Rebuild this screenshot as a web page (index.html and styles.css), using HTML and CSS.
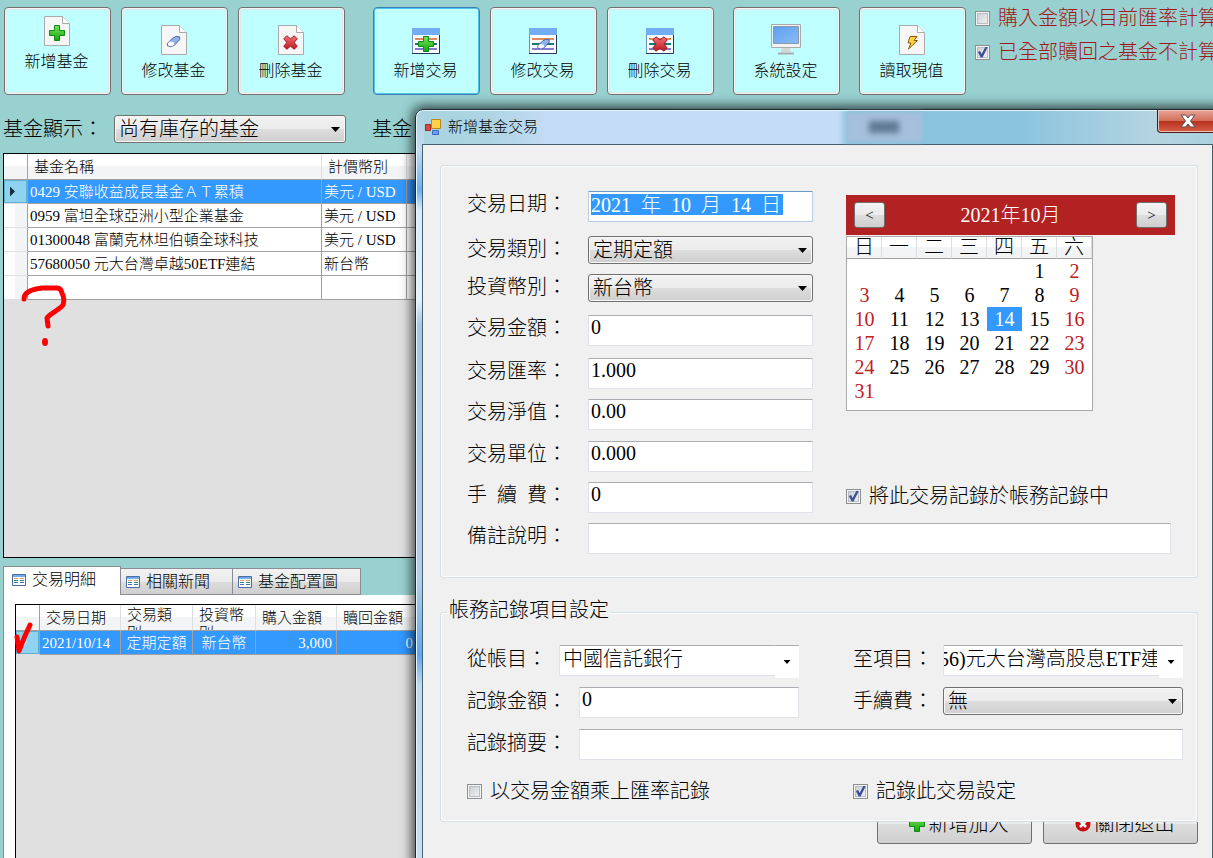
FILE: index.html
```html
<!DOCTYPE html>
<html lang="zh-Hant">
<head>
<meta charset="utf-8">
<title>新增基金交易</title>
<link rel="stylesheet" href="styles.css">
</head>
<body>
<svg class="defs" aria-hidden="true">
  <defs>
    <linearGradient id="green" x1="0" y1="0" x2="0" y2="1"><stop offset="0" stop-color="#7be05a"/><stop offset="1" stop-color="#14a80c"/></linearGradient>
    <linearGradient id="red" x1="0" y1="0" x2="0" y2="1"><stop offset="0" stop-color="#ee7376"/><stop offset="1" stop-color="#bd1a20"/></linearGradient>
    <linearGradient id="blue" x1="0" y1="0" x2="1" y2="1"><stop offset="0" stop-color="#5c9fee"/><stop offset="1" stop-color="#8abcf7"/></linearGradient>
    <symbol id="plus" viewBox="0 0 16 16"><path d="M5.500.5h5v5h5v5h-5v5h-5v-5h-5v-5h5z" fill="url(#green)" stroke="#0c8a12"/></symbol>
    <symbol id="cross" viewBox="0 0 16 16"><path d="M4 .8 8 4l4-3.200L15.200 4 12 8l3.200 4-3.200 3.200L8 12l-4 3.200L.8 12 4 8 .8 4z" fill="url(#red)" stroke="#a3161c" stroke-linejoin="round"/></symbol>
    <symbol id="eraser" viewBox="0 0 16 16"><path d="M1.500 10 7 4.500 11 2.500l3.500.5v3L9 12l-4 1.500-3.500-1z" fill="#8fb2ec" stroke="#48609f"/><path d="m2 10 2-2 4 .5 1 3-3.500 1.500-3.300-.8z" fill="#fff"/></symbol>
    <symbol id="page" viewBox="0 0 26 30"><path d="M.5.5h18l7 7v22H.5z" fill="#f6f6f6" stroke="#aaa"/><path d="M18.500.5v7h7" fill="#fff" stroke="#aaa"/></symbol>
    <symbol id="sheet" viewBox="0 0 28 26"><path d="M.5.5h27v25H.5z" fill="#fafcff" stroke="#7090b8"/><path d="M0 0h28v7H0z" fill="#72acf2"/><path d="M27.500 7v18.500H0" fill="none" stroke="#26385c"/><path d="M3 11h22" stroke="#e08a5c" stroke-width="2"/><path d="M3 16h22" stroke="#187878" stroke-width="2"/><path d="M3 21h22" stroke="#867ad0" stroke-width="2"/></symbol>
    <symbol id="list" viewBox="0 0 14 12"><path d="M.5.5h13v11H.5z" fill="#fff" stroke="#4c6c9c"/><path d="M1 1h12v2H1z" fill="#72acf2"/><path d="M2 4.500h4m2 0h4" stroke="#e0a052"/><path d="M2 6.500h4m2 0h4" stroke="#2b8a8a"/><path d="M2 8.500h4m2 0h4" stroke="#3d72c0"/></symbol>
  </defs>
</svg>

<main class="app">
  <header class="toolbar">
    <div class="group">
      <button class="tool tool-raised"><svg width="26" height="30"><use href="#page"/><use href="#plus" x="5" y="9" width="16" height="16"/></svg>新增基金</button>
      <button class="tool"><svg width="26" height="30"><use href="#page"/><use href="#eraser" x="5" y="9" width="15" height="15"/></svg>修改基金</button>
      <button class="tool"><svg width="26" height="30"><use href="#page"/><use href="#cross" x="5" y="10" width="15" height="15"/></svg>刪除基金</button>
    </div>
    <div class="group group-wide">
      <button class="tool tool-active"><svg width="28" height="30"><use href="#sheet" y="3" width="28" height="26"/><use href="#plus" x="6" y="11" width="16" height="16"/></svg>新增交易</button>
      <button class="tool"><svg width="28" height="30"><use href="#sheet" y="3" width="28" height="26"/><use href="#eraser" x="7" y="12" width="15" height="14"/></svg>修改交易</button>
      <button class="tool"><svg width="28" height="30"><use href="#sheet" y="3" width="28" height="26"/><use href="#cross" x="6" y="11" width="16" height="16"/></svg>刪除交易</button>
    </div>
    <button class="tool"><svg width="32" height="32" viewBox="0 0 32 32"><path d="M1.500 1.500h29v23h-29z" fill="#f2f2f2" stroke="#aaa"/><path d="M3.500 3.500h25v17h-25z" fill="url(#blue)" stroke="#8c99aa"/><path d="M12 25h8l1 4H11z" fill="#d5d5d5"/><path d="M8 30.500h16" stroke="#aaa" stroke-width="2"/></svg>系統設定</button>
    <button class="tool"><svg width="26" height="30"><use href="#page"/><path d="M11 11.500h7l-3 4h3.500L9.500 24l2.500-6H9z" fill="#ffd23e" stroke="#8a5a0a"/></svg>讀取現值</button>
    <div class="options">
      <label class="check"><input type="checkbox">購入金額以目前匯率計算</label>
      <label class="check"><input type="checkbox" checked>已全部贖回之基金不計算</label>
    </div>
  </header>

  <div class="filter">
    <label for="show">基金顯示：</label>
    <span class="select select-show"><select id="show"><option>尚有庫存的基金</option></select></span>
    <span class="filter-next">基金</span>
  </div>

  <section class="grid funds">
    <table>
      <colgroup><col class="c-head"><col class="c-name"><col class="c-cur"><col></colgroup>
      <thead><tr><th></th><th>基金名稱</th><th>計價幣別</th><th></th></tr></thead>
      <tbody>
        <tr class="selected"><th><i class="arrow"></i></th><td>0429 安聯收益成長基金ＡＴ累積</td><td>美元 / USD</td><td></td></tr>
        <tr><th></th><td>0959 富坦全球亞洲小型企業基金</td><td>美元 / USD</td><td></td></tr>
        <tr><th></th><td>01300048 富蘭克林坦伯頓全球科技</td><td>美元 / USD</td><td></td></tr>
        <tr><th></th><td>57680050 元大台灣卓越50ETF連結</td><td>新台幣</td><td></td></tr>
        <tr><th></th><td></td><td></td><td></td></tr>
      </tbody>
    </table>
  </section>

  <nav class="tabs">
    <button class="tab tab-on"><svg width="14" height="12"><use href="#list"/></svg>交易明細</button>
    <button class="tab"><svg width="14" height="12"><use href="#list"/></svg>相關新聞</button>
    <button class="tab"><svg width="14" height="12"><use href="#list"/></svg>基金配置圖</button>
  </nav>
  <section class="panel">
    <div class="grid trades">
      <table>
        <colgroup><col class="c-head"><col class="c-date"><col class="c-type"><col class="c-coin"><col class="c-buy"><col class="c-sell"><col></colgroup>
        <thead><tr><th></th><th>交易日期</th><th><div class="wrap">交易類別</div></th><th><div class="wrap">投資幣別</div></th><th>購入金額</th><th>贖回金額</th><th></th></tr></thead>
        <tbody><tr class="selected"><th><i class="arrow arrow-dim"></i></th><td>2021/10/14</td><td class="name">定期定額</td><td class="name">新台幣</td><td class="num">3,000</td><td class="num">0</td><td></td></tr></tbody>
      </table>
    </div>
  </section>

  <svg class="mark mark-question" width="52" height="66" viewBox="0 0 52 66"><path d="M4 17C4 10 13 7 22 6h15q4 0 5 5c2 4 2 9 1 12-5 6-13 8-16 13l1 8" fill="none" stroke="#f00" stroke-width="5" stroke-linecap="round" stroke-linejoin="round"/><ellipse cx="25" cy="60" rx="3" ry="4" fill="#f00"/></svg>
  <svg class="mark mark-tick" width="22" height="36" viewBox="0 0 22 36"><path d="M4 17 6 31C10 20 13 13 17 5" fill="none" stroke="#f00" stroke-width="5" stroke-linecap="round" stroke-linejoin="round"/></svg>
</main>

<div class="dialog" role="dialog" aria-labelledby="title">
  <div class="titlebar">
    <svg width="18" height="18" viewBox="0 0 18 18"><path d="M7.500 1.500h9v9h-9z" fill="#ffd04a" stroke="#b98a18"/><path d="M1.500 6.500h5v6h-5z" fill="#d84c3e" stroke="#9c2b22"/><path d="M8.500 12.500h6v4h-6z" fill="#6c9df0" stroke="#3f6cc8"/></svg>
    <h1 id="title">新增基金交易</h1>
    <span class="ghost" aria-hidden="true"></span>
    <button class="close" aria-label="關閉"><svg width="16" height="14" viewBox="0 0 16 14"><path d="M1 1h4.500L8 4l2.500-3H15l-4.500 6 4.500 6h-4.500L8 10l-2.500 3H1l4.500-6z" fill="#fff" stroke="#5b4a50"/></svg></button>
  </div>
  <form class="client">
    <fieldset class="box trade">
      <label for="date">交易日期：</label>
      <span class="field datebox"><input id="date" value="2021  年  10  月  14  日"></span>
      <label for="type">交易類別：</label>
      <span class="select"><select id="type"><option>定期定額</option></select></span>
      <label for="coin">投資幣別：</label>
      <span class="select"><select id="coin"><option>新台幣</option></select></span>
      <label for="amount">交易金額：</label><input class="field" id="amount" value="0">
      <label for="rate">交易匯率：</label><input class="field" id="rate" value="1.000">
      <label for="nav">交易淨值：</label><input class="field" id="nav" value="0.00">
      <label for="unit">交易單位：</label><input class="field" id="unit" value="0.000">
      <label class="spread" for="fee"><span>手</span><span>續</span><span>費：</span></label><input class="field" id="fee" value="0">
      <label for="note">備註說明：</label><input class="field wide" id="note">
      <label class="check book"><input type="checkbox" checked>將此交易記錄於帳務記錄中</label>
      <section class="calendar">
        <div class="cal-bar"><button type="button">&lt;</button><span>2021年10月</span><button type="button">&gt;</button></div>
        <div class="cal-body">
        <table>
          <thead><tr><th>日</th><th>一</th><th>二</th><th>三</th><th>四</th><th>五</th><th>六</th></tr></thead>
          <tbody>
            <tr><td></td><td></td><td></td><td></td><td></td><td>1</td><td>2</td></tr>
            <tr><td>3</td><td>4</td><td>5</td><td>6</td><td>7</td><td>8</td><td>9</td></tr>
            <tr><td>10</td><td>11</td><td>12</td><td>13</td><td class="today">14</td><td>15</td><td>16</td></tr>
            <tr><td>17</td><td>18</td><td>19</td><td>20</td><td>21</td><td>22</td><td>23</td></tr>
            <tr><td>24</td><td>25</td><td>26</td><td>27</td><td>28</td><td>29</td><td>30</td></tr>
            <tr><td>31</td><td></td><td></td><td></td><td></td><td></td><td></td></tr>
          </tbody>
        </table>
        </div>
      </section>
    </fieldset>

    <fieldset class="box account">
      <legend>帳務記錄項目設定</legend>
      <div class="row">
        <div class="pair left"><label for="from">從帳目：</label><span class="combo"><input class="field" id="from" value="中國信託銀行"><button type="button" aria-label="展開"></button></span></div>
        <div class="pair right"><label for="to">至項目：</label><span class="combo"><input class="field scrolled" id="to" value="56)元大台灣高股息ETF連"><button type="button" aria-label="展開"></button></span></div>
      </div>
      <div class="row">
        <div class="pair left"><label for="sum">記錄金額：</label><input class="field" id="sum" value="0"></div>
        <div class="pair right"><label for="cost">手續費：</label><span class="select"><select id="cost"><option>無</option></select></span></div>
      </div>
      <div class="row"><div class="pair full"><label for="memo">記錄摘要：</label><input class="field" id="memo"></div></div>
      <div class="row row-checks">
        <label class="check left"><input type="checkbox">以交易金額乘上匯率記錄</label>
        <label class="check right"><input type="checkbox" checked>記錄此交易設定</label>
      </div>
    </fieldset>

    <div class="actions">
      <button type="button"><svg width="16" height="16"><use href="#plus"/></svg>新增加入</button>
      <button type="button"><svg width="16" height="16" viewBox="0 0 16 16"><circle cx="8" cy="8" r="7.500" fill="#c81010"/><path d="m5 5 6 6m0-6-6 6" stroke="#fff" stroke-width="2.500"/></svg>關閉退出</button>
    </div>
  </form>
</div>
</body>
</html>
```
FILE: styles.css
```css
* { box-sizing: border-box; }

body {
  margin: 0;
  height: 100vh;
  position: relative;
  overflow: hidden;
  background: #99d1d1;
  color: #000;
  font: 300 20px/24px "Liberation Serif", "Noto Sans CJK TC", serif;
  white-space: nowrap;
}

button, input, select { font: inherit; color: inherit; margin: 0; padding: 0; border-radius: 0; }
.defs { position: absolute; width: 0; height: 0; }

.app { display: flex; flex-direction: column; height: 100%; padding: 7px 0 0 3px; }

/* toolbar */
.toolbar { display: flex; gap: 19px; padding-left: 1px; }
.group { display: flex; gap: 10px; }
.group-wide { margin-left: 9px; }
.tool {
  width: 107px;
  height: 88px;
  flex: none;
  display: flex;
  flex-direction: column;
  align-items: center;
  justify-content: flex-end;
  gap: 4px;
  padding: 0 2px 11px 0;
  background: #bfffff;
  border: 1px solid #707070;
  border-radius: 4px;
  box-shadow: inset 0 0 0 1px #f4f4f4, inset 0 0 0 2px #dfe8e8;
  font-size: 16px;
  line-height: 24px;
}
.tool-raised { padding-bottom: 20px; }
.tool-active { border-color: #3c7fb1; box-shadow: inset 0 0 0 1px #55c4ea; }
.options { display: flex; flex-direction: column; gap: 10px; margin: -1px 0 0 -10px; color: #a01818; }

.check { display: flex; align-items: center; gap: 8px; }
.check input {
  appearance: none;
  flex: none;
  width: 15px;
  height: 15px;
  border: 1px solid #8e8f8f;
  background: linear-gradient(135deg, #c4c9d0, #f6f6f6);
  box-shadow: inset 0 0 0 1px #f4f4f4, inset 0 0 0 2px #b8bec6;
}
.check input:checked::after {
  content: "";
  display: block;
  width: 11px;
  height: 11px;
  margin: 1px;
  background: #3a4f94;
  clip-path: polygon(8% 50%, 28% 42%, 42% 68%, 78% 0, 98% 4%, 50% 100%, 34% 100%);
}

/* drop-downs */
.select { display: block; position: relative; height: 28px; }
.select select {
  appearance: none;
  display: block;
  width: 100%;
  height: 28px;
  padding: 0 24px 0 4px;
  border: 1px solid #707070;
  border-radius: 3px;
  background: linear-gradient(#f2f2f2, #ebebeb 50%, #dddddd 50%, #cfcfcf);
  box-shadow: inset 0 0 0 1px #f8f8f8;
}
.select::after, .combo button::after {
  content: "";
  width: 9px;
  height: 5px;
  background: #000;
  clip-path: polygon(0 0, 100% 0, 50% 100%);
}
.select::after { position: absolute; right: 6px; top: 12px; pointer-events: none; }

.filter { display: flex; align-items: center; margin-top: 20px; height: 28px; }
.select-show { width: 232px; margin-left: 11px; }
.filter-next { margin-left: 26px; }

/* data grids */
.grid { border: 1px solid #000; border-right: 0; background: #e0e0e0; overflow: hidden; font-size: 15px; line-height: 22px; }
.funds { flex: none; height: 405px; margin-top: 10px; }
.grid table { width: 100%; table-layout: fixed; border-collapse: separate; border-spacing: 0; }
.grid th, .grid td { height: 24px; padding: 0 0 0 2px; border-right: 1px solid #a0a0a0; border-bottom: 1px solid #a0a0a0; font-weight: 300; text-align: left; overflow: hidden; }
.grid td { background: #fff; }
.grid thead th { height: 26px; padding-left: 6px; border-right-color: #dcdee2; background: linear-gradient(#fff 50%, #f3f4f6 50%); }
.grid th:first-child { border-right-color: #a0a0a0; }
.grid tbody th { border-bottom-color: #e0e0e4; background: linear-gradient(90deg, #fff 50%, #f3f4f6 50%); }
.grid .selected td { background: #3399ff; color: #fff; }
.grid .selected th { background: #8fd3f3; box-shadow: inset 0 0 0 1px #62aed2; }
.grid .num { text-align: right; padding-right: 4px; }
.c-head { width: 24px; }
.c-name { width: 294px; }
.c-cur { width: 85px; }
.c-date { width: 81px; }
.c-type { width: 72px; }
.c-coin { width: 63px; }
.c-buy { width: 81px; }
.c-sell { width: 81px; }
.arrow { display: block; width: 5px; height: 10px; margin-left: 4px; background: #1c2c38; clip-path: polygon(0 0, 100% 50%, 0 100%); }
.arrow-dim { background: #d8f2ff; }
.wrap { width: 50px; height: 24px; line-height: 18px; overflow: hidden; white-space: normal; }

/* tabs */
.tabs { display: flex; align-items: flex-end; margin-top: 8px; flex: none; }
.tab {
  display: flex;
  align-items: center;
  gap: 6px;
  height: 27px;
  padding: 0 22px 0 5px;
  border: 1px solid #898c95;
  background: linear-gradient(#f2f2f2, #ebebeb 50%, #dddddd 50%, #cfcfcf);
  font-size: 16px;
}
.tab + .tab { border-left: 0; }
.tab-on { height: 29px; padding: 0 24px 2px 8px; border-bottom: 0; background: #fff; }
.panel { flex: 1; display: flex; padding: 9px 0 0 11px; border-left: 1px solid #898c95; background: #fff; }
.trades { flex: 1; border-bottom: 0; }
.trades .name { padding: 0; text-align: center; }

/* freehand pen marks over the grids */
.mark { position: absolute; }
.mark-question { left: 20px; top: 282px; }
.mark-tick { left: 13px; top: 620px; }

/* dialog window */
.dialog {
  position: absolute;
  left: 415px;
  top: 109px;
  right: -8px;
  bottom: -8px;
  display: flex;
  flex-direction: column;
  padding: 0 7px 0 6px;
  border: 1px solid #1a2a30;
  border-radius: 8px 0 0 0;
  background:
    linear-gradient(180deg, #a9d3de 0, #c3dcf0 40px, #6aaef5 80px, #d8ebf8 100px, #e4f0fb 190px, #a9c4e4 215px, #b4cdea 470px, #5ea7ef 545px, #c0d8f0 575px, #c7dff4) left / 8px 100% no-repeat,
    linear-gradient(90deg, #a9d3de, #acd4e2 70px, #c3dbf4 130px, #c5dcf8 422px, #8ac4de 432px, #8ac4de 600px, #b4d4e0 740px, #a9d0de);
  box-shadow: inset 0 0 0 1px #e8f6fb, 0 0 12px 3px rgba(0, 0, 0, .7);
}
.titlebar { display: flex; align-items: center; height: 34px; flex: none; padding-left: 2px; }
.titlebar h1 { margin: 0 0 0 6px; font-size: 15px; font-weight: 300; }
.ghost { display: flex; align-items: center; justify-content: center; width: 76px; height: 30px; margin-left: 308px; background: #a5bfdc; filter: blur(2px); }
.ghost::after { content: ""; width: 30px; height: 12px; background: #5f7894; filter: blur(2px); }
.close {
  display: flex;
  justify-content: center;
  align-items: center;
  align-self: flex-start;
  width: 62px;
  height: 23px;
  margin-left: auto;
  margin-right: -6px;
  border: 1px solid #4c1a1a;
  border-top: 0;
  border-radius: 0 0 4px 4px;
  background: linear-gradient(#e8a598, #d2705c 48%, #b8301c 50%, #d4604a);
  box-shadow: inset 0 0 0 1px #f0c0b4;
}
.client { flex: 1; padding: 20px 14px 0 17px; border: 1px solid #46616e; background: #f0f0f0; overflow: hidden; }

.box { margin: 0; min-width: 0; border: 1px solid #d5dfe5; border-radius: 3px; box-shadow: inset 0 0 0 1px #fafcfc; background: #f0f0f0; }
.trade {
  display: grid;
  grid-template-columns: 121px 225px 33px 1fr;
  grid-template-rows: 45px 38px 41px 43px 41px 42px 41px 41px 31px;
  align-items: start;
  height: 413px;
  padding: 25px 22px 0 26px;
}
.trade > label { grid-column: 1; line-height: 27px; }
.trade > .field, .trade > .select { grid-column: 2; }
.trade > .wide { grid-column: 2 / 5; width: auto; margin-right: 4px; }
.spread { display: flex; gap: 10px; }
.field { display: block; width: 100%; min-width: 0; height: 31px; padding: 0 2px 6px; border: 1px solid #dfe2e8; border-top-color: #abadb3; border-radius: 1px; background: #fff; }
.datebox { padding: 2px; border-color: #b5cfe7; border-top-color: #6d9ac4; }
.datebox input { display: block; width: 192px; height: 21px; border: 0; background: #3399ff; color: #fff; }
.trade > .book { grid-area: 8 / 4; line-height: 28px; }

.calendar { grid-area: 1 / 4 / 8 / 5; margin-top: 4px; }
.cal-bar { display: flex; align-items: center; justify-content: space-between; height: 40px; padding: 0 8px; background: #b22222; color: #fff; }
.cal-bar button { width: 31px; height: 26px; border: 1px solid #707070; border-radius: 3px; background: linear-gradient(#f2f2f2, #ebebeb 50%, #dddddd 50%, #cfcfcf); color: #000; font-size: 15px; line-height: 20px; }
.cal-body { width: 247px; margin-top: 1px; padding-bottom: 7px; border: 1px solid #a9a9a9; background: #fff; }
.cal-body table { width: 100%; table-layout: fixed; border-collapse: separate; border-spacing: 0; }
.cal-body th { height: 22px; padding: 0; border-right: 1px solid #dcdee2; border-bottom: 1px solid #a0a0a0; background: linear-gradient(#fff 50%, #f3f4f6 50%); font-weight: 300; line-height: 21px; }
.cal-body td { height: 24px; padding: 0; text-align: center; }
.cal-body td:first-child, .cal-body td:last-child { color: #c02020; }
.cal-body .today { background: #3399ff; color: #fff; }

.account { height: 224px; margin-top: 20px; padding: 0 14px 0 26px; }
.account legend { margin-left: -20px; padding: 0 2px 4px; line-height: 24px; }
.row { display: flex; justify-content: space-between; height: 42px; }
.row:first-of-type { margin-top: 19px; }
.pair { display: flex; justify-content: space-between; }
.pair label { line-height: 28px; flex: none; }
.left { width: 332px; }
.right { width: 330px; }
.full { flex: 1; }
.pair .field { width: 220px; }
.full .field { width: auto; flex: 1; margin-left: 12px; }
.pair > .select { width: 240px; }
.combo { display: flex; width: 240px; height: 31px; }
.combo .field { flex: 1; width: auto; border-right: 0; padding-left: 3px; }
.combo .scrolled { padding-left: 0; text-indent: -5px; }
.combo button { width: 24px; height: 33px; display: flex; align-items: center; justify-content: center; border: 0; border-top: 1px solid #abadb3; background: #fff; }
.combo button::after { width: 7px; height: 4px; }
.row-checks { margin-top: 8px; align-items: flex-start; height: 28px; }

.actions { display: flex; justify-content: flex-end; align-items: flex-end; gap: 11px; height: 22px; overflow: hidden; }
.actions button { display: flex; align-items: center; justify-content: center; gap: 4px; flex: none; width: 155px; height: 40px; padding-left: 8px; border: 1px solid #707070; border-radius: 3px; background: linear-gradient(#f2f2f2, #ebebeb 50%, #dddddd 50%, #cfcfcf); }
```
